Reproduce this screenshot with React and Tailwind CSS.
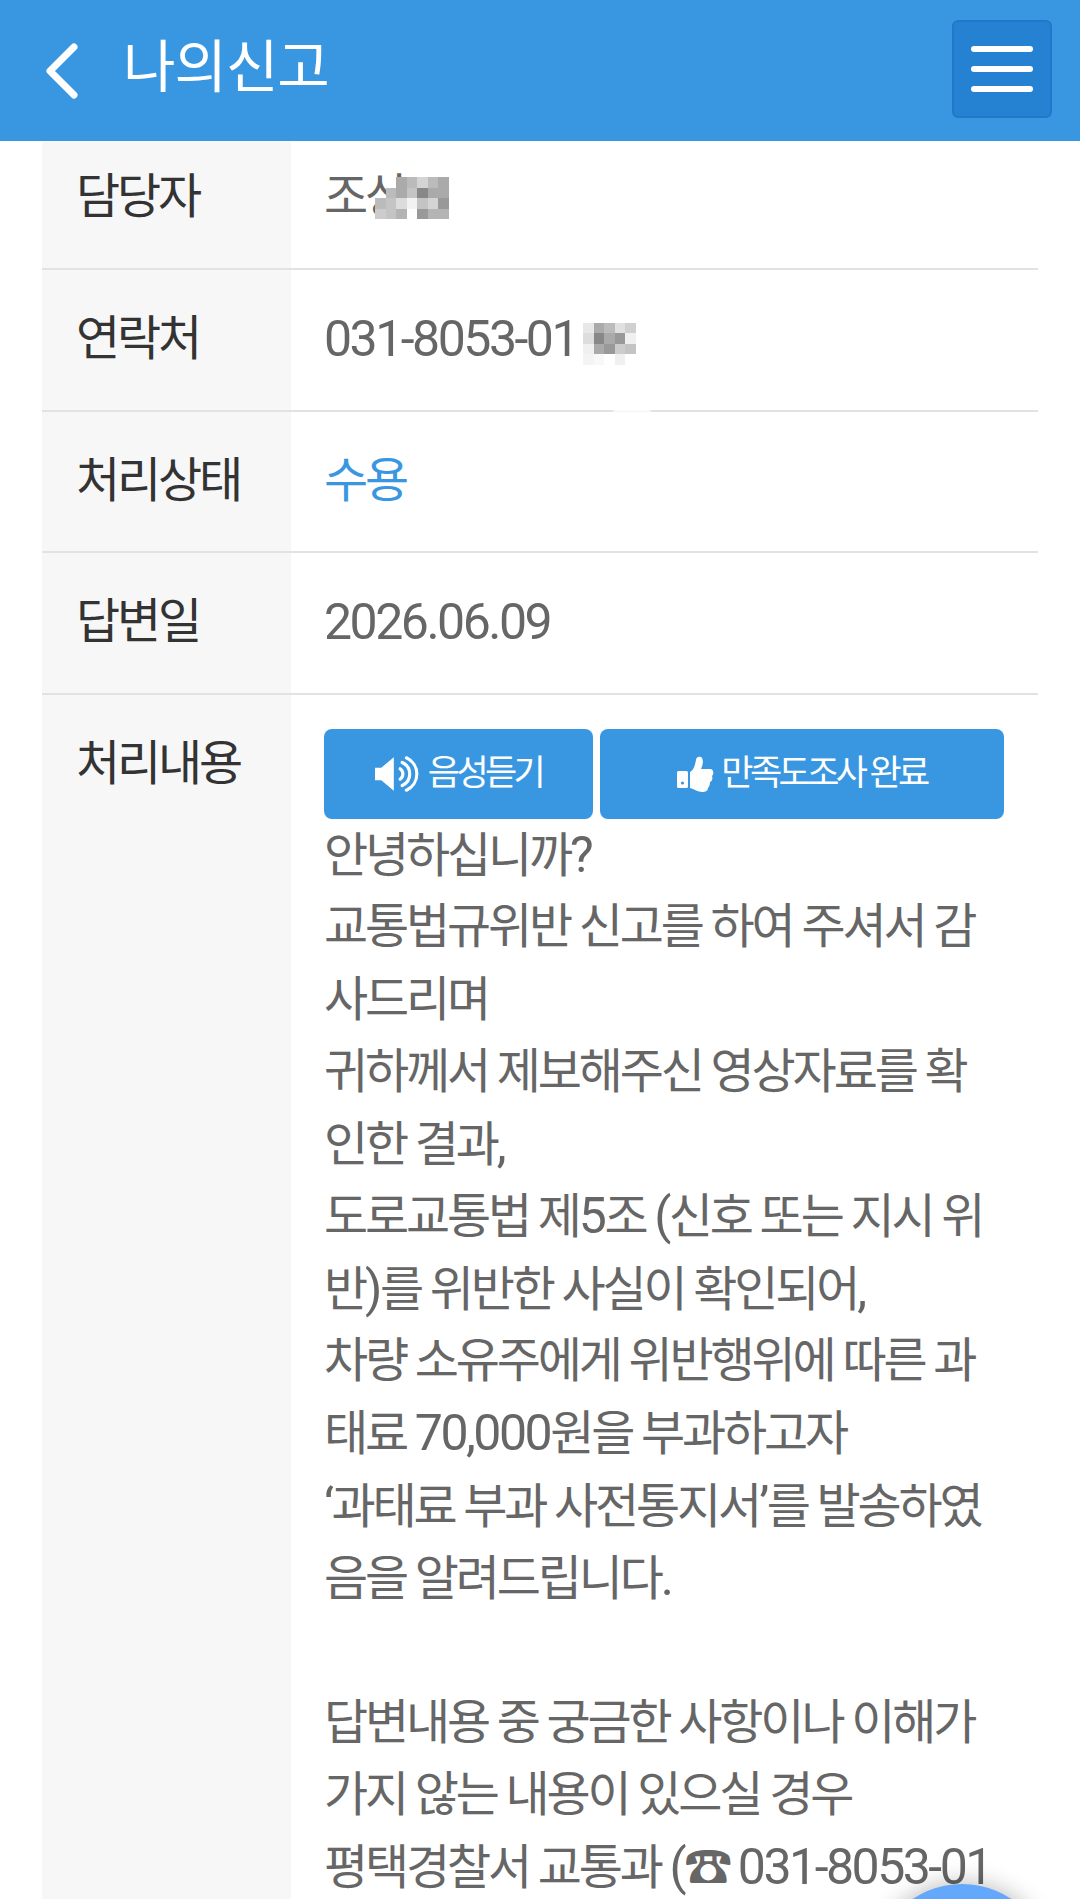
import React from 'react';

const mosaicName = [
  ['transparent', '#ffffff', '#aaaaaa', '#bbbbbb', '#d4d4d4', '#bbbbbb', '#aaaaaa'],
  ['transparent', '#bbbbbb', '#aaaaaa', '#c4c4c4', '#888888', '#aaaaaa', '#aaaaaa'],
  ['#bbbbbb', '#c4c4c4', '#dcdcdc', '#f2f2f2', '#c4c4c4', '#d4d4d4', '#999999'],
  ['#cccccc', '#c4c4c4', '#b4b4b4', '#ffffff', '#999999', '#b4b4b4', '#b4b4b4'],
];

const mosaicPhone = [
  ['#e8e8e8', '#aaaaaa', '#bbbbbb', '#e0e0e0', '#d0d0d0'],
  ['#dddddd', '#888888', '#aaaaaa', '#999999', '#f0f0f0'],
  ['#f0f0f0', '#aaaaaa', '#999999', '#cccccc', '#c4c4c4'],
  ['#f4f4f4', '#f8f8f8', '#ffffff', '#f0f0f0', '#ffffff'],
];

const answer = [
  '안녕하십니까?',
  '교통법규위반 신고를 하여 주셔서 감',
  '사드리며',
  '귀하께서 제보해주신 영상자료를 확',
  '인한 결과,',
  '도로교통법 제5조 (신호 또는 지시 위',
  '반)를 위반한 사실이 확인되어,',
  '차량 소유주에게 위반행위에 따른 과',
  '태료 70,000원을 부과하고자',
  '‘과태료 부과 사전통지서’를 발송하였',
  '음을 알려드립니다.',
  '\u00a0',
  '답변내용 중 궁금한 사항이나 이해가',
  '가지 않는 내용이 있으실 경우',
  '평택경찰서 교통과 (☎ 031-8053-01',
];

// latin runs are set a bit larger than the hangul, as in the picture
function Mixed({ text }) {
  return text.split(/([\x21-\x7e‘’]+)/).map((part, i) =>
    i % 2 ? (
      <span key={i} className="text-[50px] tracking-[-2.5px]">{part}</span>
    ) : (
      part
    ),
  );
}

function Mosaic({ cells, className }) {
  return (
    <span className={`absolute flex flex-col ${className}`}>
      {cells.map((row, r) => (
        <span key={r} className="flex">
          {row.map((c, i) => (
            <span key={i} className="block w-[10.5px] h-[10.5px]" style={{ background: c }} />
          ))}
        </span>
      ))}
    </span>
  );
}

function Row({ label, children }) {
  return (
    <div className="flex h-[141.75px] border-b-2 border-[#e2e2e2]">
      <div className="w-[249px] shrink-0 bg-[#f7f7f7] pl-[34px] pt-[33px] text-[#333] leading-[72px]">{label}</div>
      <div className="flex-1 pl-[33px] pt-[33px] text-[#666] leading-[72px]">{children}</div>
    </div>
  );
}

export default function App() {
  return (
    <div className="relative h-[1899px] w-[1080px] overflow-hidden bg-white font-['Roboto','Noto_Sans_CJK_KR',sans-serif] text-[48px] tracking-[-3.15px]">
      {/* Header */}
      <div className="relative z-10 flex h-[141px] items-center bg-[#3997e2]">
        <svg className="ml-[42px] h-[60px] w-[40px]" viewBox="0 0 40 60" fill="none" stroke="white" strokeWidth="7" strokeLinecap="round" strokeLinejoin="round">
          <path d="M32 6 L8 30 L32 54" />
        </svg>
        <div className="ml-[41px] pb-[5px] text-[57px] tracking-[-1px] text-white">나의신고</div>
        <div className="ml-auto mr-[28px] mb-[3px] flex h-[98px] w-[100px] flex-col items-center justify-center gap-[14px] rounded-[6px] border-2 border-[#2079c8] bg-[#2582d2]">
          <span className="block h-[6px] w-[62px] rounded-full bg-white" />
          <span className="block h-[6px] w-[62px] rounded-full bg-white" />
          <span className="block h-[6px] w-[62px] rounded-full bg-white" />
        </div>
      </div>

      {/* Table, scrolled so the first row is cut under the header */}
      <div className="mx-[42px] mt-[-13px]">
        <Row label="담당자">
          <span className="relative inline-block">
            조상
            <Mosaic cells={mosaicName} className="left-[51px] top-[16px]" />
          </span>
        </Row>
        <Row label="연락처">
          <span className="relative inline-block">
            <Mixed text="031-8053-01" />
            <Mosaic cells={mosaicPhone} className="left-[259px] top-[20px]" />
            <span className="absolute left-[289px] top-[104px] h-[5px] w-[38px] rounded-full bg-white blur-[1px]" />
          </span>
        </Row>
        <Row label="처리상태">
          <span className="text-[#3997e2]">수용</span>
        </Row>
        <Row label="답변일">
          <Mixed text="2026.06.09" />
        </Row>
        <div className="flex">
          <div className="w-[249px] shrink-0 bg-[#f7f7f7] pl-[34px] pt-[33px] text-[#333] leading-[72px]">처리내용</div>
          <div className="flex-1 pl-[33px] pt-[34px] text-[#666]">
            <div className="flex gap-[7px] text-[35px] tracking-[-3.6px] text-white">
              <button className="flex h-[90px] w-[269px] items-center justify-center gap-[7px] rounded-[8px] bg-[#3997e2]">
                <svg className="h-[36px] w-[46px]" viewBox="0 0 44 34" fill="none">
                  <path d="M0 11 H6 L18 1 V33 L6 23 H0 Z" fill="white" />
                  <g stroke="white" strokeWidth="3" strokeLinecap="round">
                    <path d="M24 12 A6 6 0 0 1 24 22" />
                    <path d="M26 6 A12 12 0 0 1 26 28" />
                    <path d="M30 1.5 A17 17 0 0 1 30 32.5" />
                  </g>
                </svg>
                음성듣기
              </button>
              <button className="flex h-[90px] w-[404px] items-center justify-center gap-[7px] rounded-[8px] bg-[#3997e2]">
                <svg className="h-[36px] w-[37px]" viewBox="0 0 37 36" fill="white">
                  <path fillRule="evenodd" d="M1.5 15 H9.5 A1.5 1.5 0 0 1 11 16.5 V30.5 A1.5 1.5 0 0 1 9.5 32 H1.5 A1.5 1.5 0 0 1 0 30.5 V16.5 A1.5 1.5 0 0 1 1.5 15 Z M5.5 25.4 A1.6 1.6 0 1 0 5.5 28.6 A1.6 1.6 0 1 0 5.5 25.4 Z" />
                  <path d="M13 16 C17 14 18 9 19 4 C19 1 22 0 24 1 C27 3 26 9 24 13 L33 13 C37 13 37 18 35 20 C36 23 35 25 33 26 C33 29 32 31 31 32 C31 35 28 36 25 36 C21 36 17 33 13 32 Z" />
                </svg>
                만족도조사 완료
              </button>
            </div>
            <div className="leading-[72.3px] whitespace-nowrap">
              {answer.map((line, i) => (
                <div key={i} className="h-[72.3px]">
                  <Mixed text={line} />
                </div>
              ))}
            </div>
          </div>
        </div>
      </div>

      {/* Floating button */}
      <div className="absolute left-[873px] top-[1884px] h-[178px] w-[178px] rounded-full bg-[#64a8fc] shadow-[0_0_24px_rgba(0,0,0,0.3)]" />
    </div>
  );
}
